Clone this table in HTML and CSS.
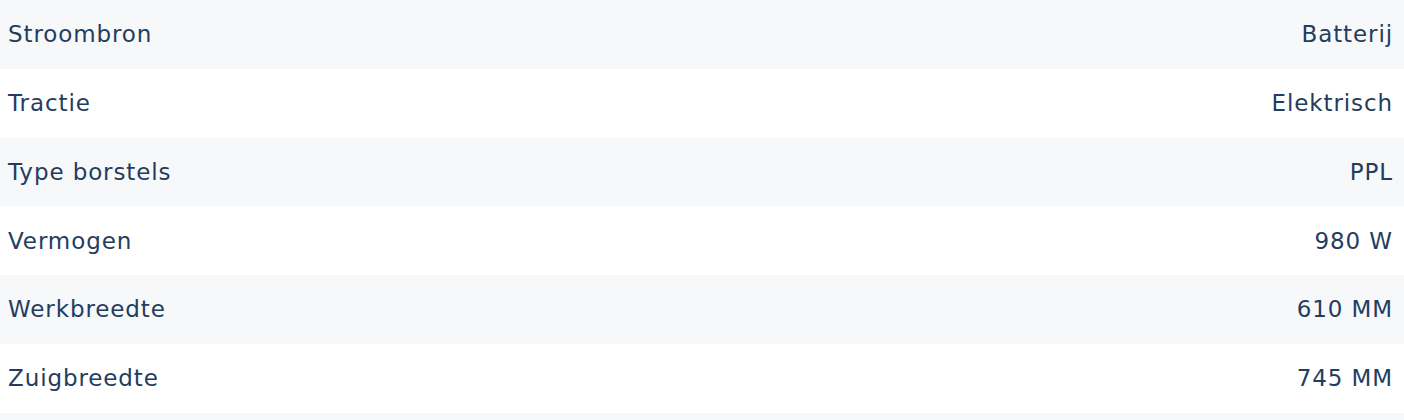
FILE: index.html
```html
<!DOCTYPE html>
<html lang="nl">
<head>
<meta charset="utf-8">
<title>Specificaties</title>
<link rel="stylesheet" href="styles.css">
</head>
<body>
<div class="specs">
  <div class="row"><span class="label">Stroombron</span><span class="value">Batterij</span></div>
  <div class="row"><span class="label">Tractie</span><span class="value">Elektrisch</span></div>
  <div class="row"><span class="label">Type borstels</span><span class="value">PPL</span></div>
  <div class="row"><span class="label">Vermogen</span><span class="value">980 W</span></div>
  <div class="row"><span class="label">Werkbreedte</span><span class="value">610 MM</span></div>
  <div class="row"><span class="label">Zuigbreedte</span><span class="value">745 MM</span></div>
  <div class="row row-end"></div>
</div>
</body>
</html>
```
FILE: styles.css
```css
html, body {
  margin: 0;
  padding: 0;
  background: #ffffff;
}
.specs {
  display: flex;
  flex-direction: column;
  font-family: "DejaVu Sans", sans-serif;
  font-size: 23px;
  letter-spacing: 0.9px;
  color: #243d5e;
}
.row {
  display: flex;
  justify-content: space-between;
  align-items: center;
  height: 68.75px;
  padding: 0 11px 0 8px;
  box-sizing: border-box;
  flex-shrink: 0;
}
.row:nth-child(odd) {
  background: #f7f8fa;
}
.row-end {
  height: 7.5px;
}
.value {
  text-align: right;
}
```
